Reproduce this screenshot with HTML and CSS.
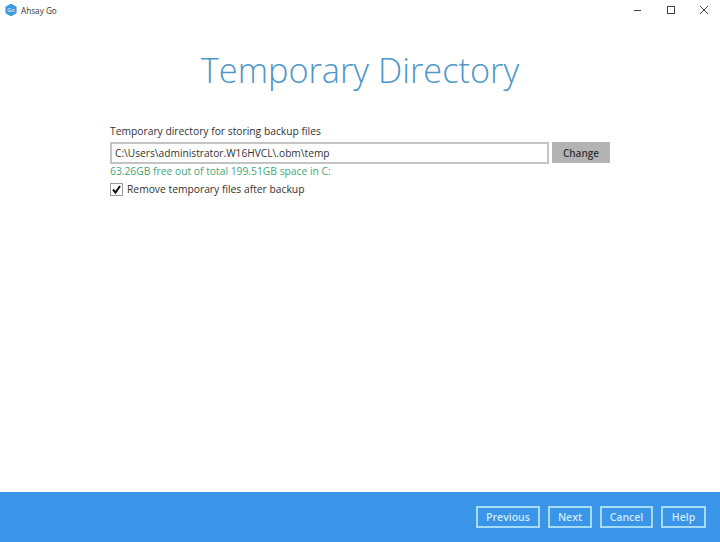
FILE: index.html
```html
<!DOCTYPE html>
<html lang="en">
<head>
  <meta charset="UTF-8">
  <title>Ahsay Go</title>
  <link rel="stylesheet" href="styles.css">
</head>
<body>
  <div class="window">
    <header class="titlebar">
      <div class="app-name">
        <svg class="app-icon" width="12" height="12" viewBox="0 0 12 12">
          <path d="M6 0.5 L10.8 3.2 V8.8 L6 11.5 L1.2 8.8 V3.2 Z" fill="#3d9be0" stroke="#3d9be0" stroke-width="1.5" stroke-linejoin="round"/>
          <text x="6" y="8" class="app-icon-text">Go</text>
        </svg>
        <span>Ahsay Go</span>
      </div>
      <div class="window-controls">
        <svg width="10" height="10" viewBox="0 0 10 10"><path d="M1 5.5 H8" stroke="#444" fill="none"/></svg>
        <svg width="10" height="10" viewBox="0 0 10 10"><rect x="1.5" y="1.5" width="7" height="7" stroke="#444" fill="none"/></svg>
        <svg width="10" height="10" viewBox="0 0 10 10"><path d="M1 1 L9 9 M9 1 L1 9" stroke="#444" fill="none"/></svg>
      </div>
    </header>

    <main class="content">
      <h1>Temporary Directory</h1>
      <div class="form">
        <label class="field-label" for="temp-dir">Temporary directory for storing backup files</label>
        <div class="path-row">
          <input class="path-input" id="temp-dir" type="text" value="C:\Users\administrator.W16HVCL\.obm\temp">
          <button class="change-btn">Change</button>
        </div>
        <p class="free-space">63.26GB free out of total 199.51GB space in C:</p>
        <label class="check-row">
          <span class="checkbox">
            <svg width="11" height="11" viewBox="0 0 11 11"><path d="M2 5.5 L4.5 8.5 L9 2" stroke="#111" stroke-width="2" fill="none"/></svg>
          </span>
          Remove temporary files after backup
        </label>
      </div>
    </main>

    <footer class="footer">
      <button class="nav-btn btn-previous">Previous</button>
      <button class="nav-btn btn-next">Next</button>
      <button class="nav-btn btn-cancel">Cancel</button>
      <button class="nav-btn btn-help">Help</button>
    </footer>
  </div>
</body>
</html>
```

FILE: styles.css
```css
html, body {
  margin: 0;
  padding: 0;
  height: 100%;
}

body {
  font-family: "Open Sans", "Noto Sans", sans-serif;
  background-color: #ffffff;
  color: #333;
  overflow: hidden;
}

.window {
  display: flex;
  flex-direction: column;
  height: 542px;
}

.titlebar {
  display: flex;
  justify-content: space-between;
  align-items: center;
  height: 20px;
  padding: 0 0 0 5px;
  font-size: 8.2px;
  color: #333;
}

.app-name {
  display: flex;
  align-items: center;
  gap: 4px;
}

.app-icon-text {
  font-size: 5.5px;
  fill: #fff;
  text-anchor: middle;
}

.window-controls {
  display: flex;
  gap: 23px;
  padding-right: 11px;
}

.content {
  flex: 1;
}

h1 {
  margin: 25px 0 0 0;
  font-size: 34.3px;
  font-weight: 300;
  line-height: 50px;
  text-align: center;
  color: #4f97c8;
}

.form {
  margin: 28px 0 0 110px;
  width: 500px;
  font-size: 10.3px;
}

.field-label {
  display: block;
  line-height: 16px;
}

.path-row {
  display: flex;
  gap: 3px;
  margin-top: 3px;
}

.path-input {
  flex: 1;
  min-width: 0;
  height: 22px;
  box-sizing: border-box;
  padding: 0 3px;
  border: 2px solid #c4c4c4;
  font-family: inherit;
  font-size: 10.2px;
  color: #333;
  outline: none;
}

.change-btn {
  width: 58px;
  height: 21px;
  border: none;
  background-color: #b3b3b3;
  color: #333;
  font-family: inherit;
  font-size: 10px;
  font-weight: 600;
  padding: 0;
}

.free-space {
  margin: 0;
  line-height: 15px;
  color: #3fa874;
}

.check-row {
  display: flex;
  align-items: center;
  gap: 4px;
  margin-top: 2px;
  line-height: 16px;
}

.checkbox {
  display: flex;
  align-items: center;
  justify-content: center;
  width: 13px;
  height: 13px;
  box-sizing: border-box;
  border: 1px solid #999;
}

.footer {
  display: flex;
  justify-content: flex-end;
  align-items: center;
  gap: 8px;
  height: 50px;
  padding: 0 14px 0 0;
  box-sizing: border-box;
  background-color: #3a94e8;
}

.nav-btn {
  height: 22px;
  padding: 0;
  border: 2px solid #a5dcf5;
  background: transparent;
  color: #cfeaf8;
  font-family: inherit;
  font-size: 10.5px;
  font-weight: 600;
}

.btn-previous {
  width: 64px;
}

.btn-next {
  width: 44px;
}

.btn-cancel {
  width: 53px;
}

.btn-help {
  width: 45px;
}
```
